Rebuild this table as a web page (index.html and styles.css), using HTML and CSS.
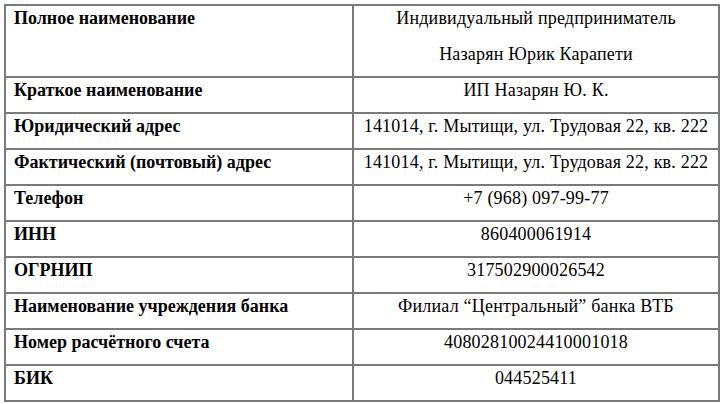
FILE: index.html
```html
<!DOCTYPE html>
<html lang="ru">
<head>
<meta charset="utf-8">
<title>Реквизиты</title>
<link rel="stylesheet" href="styles.css">
</head>
<body>
<table class="req">
  <colgroup><col class="c-label"><col class="c-value"></colgroup>
  <tr>
    <td class="label"><p>Полное наименование</p></td>
    <td class="value"><p>Индивидуальный предприниматель</p><p>Назарян Юрик Карапети</p></td>
  </tr>
  <tr>
    <td class="label"><p>Краткое наименование</p></td>
    <td class="value"><p>ИП Назарян Ю. К.</p></td>
  </tr>
  <tr>
    <td class="label"><p>Юридический адрес</p></td>
    <td class="value"><p>141014, г. Мытищи, ул. Трудовая 22, кв. 222</p></td>
  </tr>
  <tr>
    <td class="label"><p>Фактический (почтовый) адрес</p></td>
    <td class="value"><p>141014, г. Мытищи, ул. Трудовая 22, кв. 222</p></td>
  </tr>
  <tr>
    <td class="label"><p>Телефон</p></td>
    <td class="value"><p>+7 (968) 097-99-77</p></td>
  </tr>
  <tr>
    <td class="label"><p>ИНН</p></td>
    <td class="value"><p>860400061914</p></td>
  </tr>
  <tr>
    <td class="label"><p>ОГРНИП</p></td>
    <td class="value"><p>317502900026542</p></td>
  </tr>
  <tr>
    <td class="label"><p>Наименование учреждения банка</p></td>
    <td class="value"><p>Филиал “Центральный” банка ВТБ</p></td>
  </tr>
  <tr>
    <td class="label"><p>Номер расчётного счета</p></td>
    <td class="value"><p>40802810024410001018</p></td>
  </tr>
  <tr>
    <td class="label"><p>БИК</p></td>
    <td class="value"><p>044525411</p></td>
  </tr>
</table>
</body>
</html>
```
FILE: styles.css
```css
html, body {
  margin: 0;
  padding: 0;
  background: #ffffff;
}
body {
  font-family: "Liberation Serif", "Times New Roman", serif;
  font-size: 18px;
  color: #000000;
}
.req {
  margin: 4px 0 0 4px;
  width: 714px;
  border-collapse: collapse;
  table-layout: fixed;
}
.c-label { width: 348px; }
.c-value { width: 366px; }
.req td {
  border: 2px solid #7a7a7a;
  padding: 3px 8px 13px 8px;
  vertical-align: top;
}
.req p {
  margin: 0;
  line-height: 18px;
  white-space: nowrap;
}
.req p + p {
  margin-top: 18px;
}
.label {
  font-weight: bold;
  text-align: left;
}
.value {
  text-align: center;
  letter-spacing: 0.2px;
}
```
